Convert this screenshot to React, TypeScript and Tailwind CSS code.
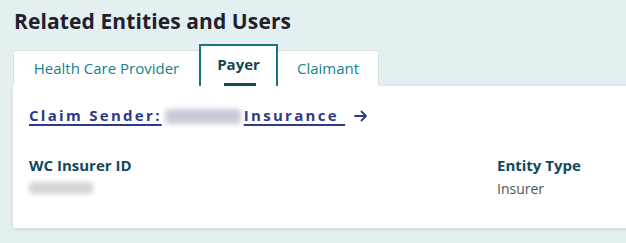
import React from 'react';

const tabs = ['Health Care Provider', 'Payer', 'Claimant'];

export default function App() {
  const active = 'Payer';
  return (
    <div
      className="w-[626px] h-[243px] overflow-hidden bg-[#e4eff1] pl-[13px] pt-[8px]"
      style={{ fontFamily: '"Open Sans", "Liberation Sans", sans-serif' }}
    >
      <h1 className="pl-[1px] text-[21px] leading-[27px] font-bold text-[#221e2c] tracking-[0.1px]">
        Related Entities and Users
      </h1>

      {/* tab strip */}
      <div className="mt-[9px] flex items-end h-[42px]">
        {tabs.map((t) =>
          t === active ? (
            <div
              key={t}
              className="relative h-[42px] w-[79px] flex items-center justify-center border-2 border-b-0 border-[#1c7482] bg-white text-[15px] font-bold text-[#0f4656]"
            >
              <span className="-mt-[3px]">{t}</span>
              <span className="absolute bottom-0 left-[23px] w-[32px] h-[3px] bg-[#0b4e5a]" />
            </div>
          ) : (
            <div
              key={t}
              className={
                'h-[36px] flex items-center justify-center border border-b-0 border-[#dcdfe0] bg-white text-[15px] text-[#17808e] ' +
                (t === 'Claimant' ? 'w-[101px] border-l-0' : 'w-[186px] border-r-0')
              }
            >
              {t}
            </div>
          )
        )}
      </div>

      {/* card */}
      <div className="h-[142px] w-[620px] bg-white shadow-[0_1px_4px_rgba(0,0,0,0.12)] pl-[16px] pt-[18px]">
        <div className="flex items-center">
          <a className="text-[15px] font-bold tracking-[2.3px] text-[#2c3a8a] underline underline-offset-[3px] decoration-[1.5px]">
            Claim Sender:
            <span className="inline-block align-middle mx-[3px] w-[76px] h-[15px] rounded-sm bg-[#c9cbd9] blur-[2.5px]" />
            Insurance{'\u00a0'}
          </a>
          <svg className="ml-[9px] mt-[2px]" width="14" height="12" viewBox="0 0 14 12" fill="none">
            <path d="M1 6h11M7.5 1.5 12 6l-4.5 4.5" stroke="#2c3a8a" strokeWidth="1.8" strokeLinecap="round" strokeLinejoin="round" />
          </svg>
        </div>

        <div className="mt-[27px] flex">
          <div className="w-[468px]">
            <div className="text-[15px] font-bold text-[#0f4a5c]">WC Insurer ID</div>
            <div className="mt-[6px] w-[64px] h-[12px] rounded-sm bg-[#d3d5d7] blur-[2.5px]" />
          </div>
          <div>
            <div className="text-[15px] font-bold text-[#0f4a5c]">Entity Type</div>
            <div className="mt-[2px] text-[14px] text-[#4d5660]">Insurer</div>
          </div>
        </div>
      </div>
    </div>
  );
}
